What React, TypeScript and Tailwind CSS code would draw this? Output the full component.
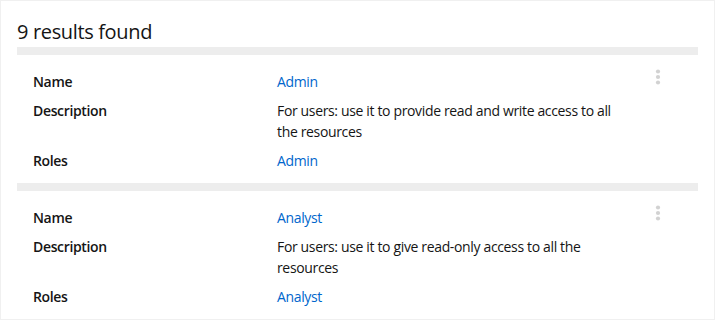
import React from "react";

type Item = { name: string; description: string; role: string };

const items: Item[] = [
  {
    name: "Admin",
    description: "For users: use it to provide read and write access to all the resources",
    role: "Admin",
  },
  {
    name: "Analyst",
    description: "For users: use it to give read-only access to all the resources",
    role: "Analyst",
  },
];

function Kebab() {
  return (
    <svg width="6" height="16" viewBox="0 0 6 16" className="block">
      <circle cx="3" cy="2.5" r="2.1" fill="#d2d2d2" />
      <circle cx="3" cy="8" r="2.1" fill="#d2d2d2" />
      <circle cx="3" cy="13.5" r="2.1" fill="#d2d2d2" />
    </svg>
  );
}

function Row({ label, children }: { label: string; children: React.ReactNode }) {
  return (
    <>
      <div className="font-semibold text-[#151515]">{label}</div>
      <div className="text-[#151515]">{children}</div>
    </>
  );
}

export default function App() {
  return (
    <div
      className="w-[715px] h-[320px] overflow-hidden bg-white border border-[#f0f0f0] px-4 tracking-[-0.35px]"
      style={{ fontFamily: '"Open Sans", "Liberation Sans", sans-serif' }}
    >
      <h2 className="pt-[18px] pb-[2px] text-[20px] leading-[26px] text-[#151515] font-normal">
        9 results found
      </h2>
      <div className="flex flex-col">
        {items.map((it) => (
          <div key={it.name} className="border-t-8 border-[#ededed] flex pt-4 pb-3 pl-4 pr-4">
            <div className="flex-1 grid grid-cols-[244px_350px] gap-y-2 text-[14px] leading-[21px]">
              <Row label="Name">
                <a className="text-[#0066cc]">{it.name}</a>
              </Row>
              <Row label="Description">{it.description}</Row>
              <Row label="Roles">
                <a className="text-[#0066cc]">{it.role}</a>
              </Row>
            </div>
            <div className="w-[27px] flex justify-start -mt-[2px]">
              <Kebab />
            </div>
          </div>
        ))}
        <div className="border-t border-[#ededed]" />
      </div>
    </div>
  );
}
